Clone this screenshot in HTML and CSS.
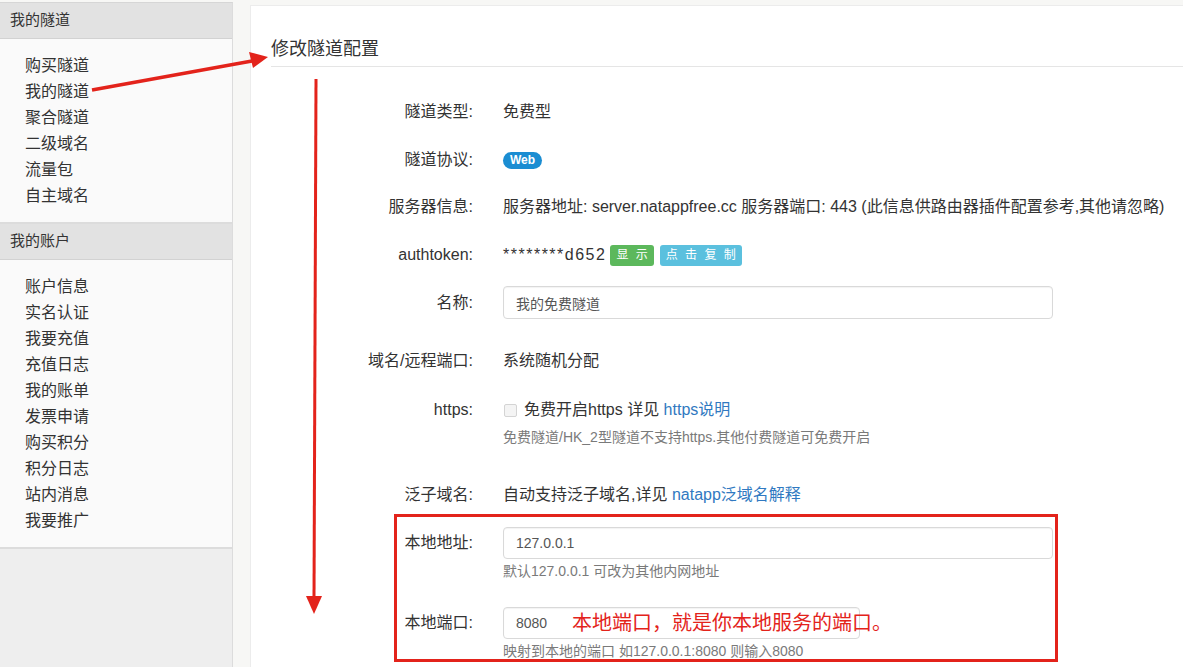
FILE: index.html
```html
<!DOCTYPE html>
<html lang="zh-CN">
<head>
  <meta charset="UTF-8">
  <title>修改隧道配置</title>
  <link rel="stylesheet" href="styles.css">
</head>
<body>
  <div class="layout">
    <aside class="sidebar">
      <div class="side-group">
        <div class="side-head">我的隧道</div>
        <ul class="side-list">
          <li>购买隧道</li>
          <li>我的隧道</li>
          <li>聚合隧道</li>
          <li>二级域名</li>
          <li>流量包</li>
          <li>自主域名</li>
        </ul>
      </div>
      <div class="side-group">
        <div class="side-head">我的账户</div>
        <ul class="side-list">
          <li>账户信息</li>
          <li>实名认证</li>
          <li>我要充值</li>
          <li>充值日志</li>
          <li>我的账单</li>
          <li>发票申请</li>
          <li>购买积分</li>
          <li>积分日志</li>
          <li>站内消息</li>
          <li>我要推广</li>
        </ul>
      </div>
    </aside>

    <main class="panel">
      <h3 class="panel-title">修改隧道配置</h3>
      <form class="form">
        <div class="row">
          <label class="row-label">隧道类型:</label>
          <div class="row-value">免费型</div>
        </div>
        <div class="row tight">
          <label class="row-label">隧道协议:</label>
          <div class="row-value"><span class="badge">Web</span></div>
        </div>
        <div class="row">
          <label class="row-label">服务器信息:</label>
          <div class="row-value">服务器地址: server.natappfree.cc 服务器端口: 443 (此信息供路由器插件配置参考,其他请忽略)</div>
        </div>
        <div class="row">
          <label class="row-label">authtoken:</label>
          <div class="row-value token-line">
            <span class="token">********d652</span>
            <button type="button" class="btn btn-green">显 示</button>
            <button type="button" class="btn btn-cyan">点 击 复 制</button>
          </div>
        </div>
        <div class="row spaced">
          <label class="row-label">名称:</label>
          <div class="row-value"><input class="field" type="text" value="我的免费隧道"></div>
        </div>
        <div class="row loose">
          <label class="row-label">域名/远程端口:</label>
          <div class="row-value">系统随机分配</div>
        </div>
        <div class="row wide">
          <label class="row-label">https:</label>
          <div class="row-value">
            <div class="check-line"><span class="check"></span>免费开启https 详见 <a class="link">https说明</a></div>
            <div class="help">免费隧道/HK_2型隧道不支持https.其他付费隧道可免费开启</div>
          </div>
        </div>
        <div class="row loose">
          <label class="row-label">泛子域名:</label>
          <div class="row-value">自动支持泛子域名,详见 <a class="link">natapp泛域名解释</a></div>
        </div>
        <div class="row input-row mid">
          <label class="row-label">本地地址:</label>
          <div class="row-value">
            <input class="field" type="text" value="127.0.0.1">
            <div class="help">默认127.0.0.1 可改为其他内网地址</div>
          </div>
        </div>
        <div class="row input-row">
          <label class="row-label">本地端口:</label>
          <div class="row-value">
            <input class="field field-port" type="text" value="8080">
            <div class="help">映射到本地的端口 如127.0.0.1:8080 则输入8080</div>
          </div>
        </div>
      </form>
    </main>
  </div>

  <svg class="marks" width="1183" height="667" viewBox="0 0 1183 667">
    <line x1="92" y1="90" x2="252" y2="61" stroke="#e3231b" stroke-width="3.5"/>
    <polygon points="268,57 249,52 253,68" fill="#e3231b"/>
    <line x1="316" y1="79" x2="314" y2="598" stroke="#e3231b" stroke-width="3"/>
    <polygon points="306,596 322,596 314,614" fill="#e3231b"/>
    <rect x="395.5" y="515.5" width="661" height="145" fill="none" stroke="#e3231b" stroke-width="3"/>
  </svg>
  <div class="note">本地端口，就是你本地服务的端口。</div>
</body>
</html>
```

FILE: styles.css
```css
html, body {
  margin: 0;
  padding: 0;
}
body {
  width: 1183px;
  height: 667px;
  overflow: hidden;
  position: relative;
  font: 16px/1.4 "Liberation Sans", "Noto Sans CJK SC", sans-serif;
  color: #333;
  background: #f7f7f5;
}
.layout {
  display: flex;
  align-items: flex-start;
  height: 667px;
}

/* sidebar */
.sidebar {
  width: 232px;
  height: 665px;
  margin-top: 2px;
  border-top: 1px solid #d6d6d6;
  border-right: 1px solid #dcdcdc;
  background: #eeeeee;
  flex-shrink: 0;
}
.side-group {
  background: #fafafa;
  border-bottom: 2px solid #dcdcdc;
}
.side-head {
  height: 35px;
  line-height: 34px;
  padding-left: 10px;
  background: #e2e2e2;
  border-bottom: 1px solid #d2d2d2;
  font-size: 15px;
  color: #333;
}
.side-list {
  list-style: none;
  margin: 0;
  padding: 14px 0 13px 25px;
}
.side-list li {
  height: 26px;
  line-height: 26px;
  font-size: 16px;
  color: #333;
}

/* main panel */
.panel {
  flex: 1;
  height: 662px;
  margin: 5px 0 0 17px;
  padding-left: 20px;
  background: #fff;
  border-left: 1px solid #ececec;
  border-top: 1px solid #ececec;
}
.panel-title {
  margin: 30px 0 0;
  padding-bottom: 4px;
  line-height: 26px;
  font-size: 18px;
  font-weight: normal;
  color: #333;
  border-bottom: 1px solid #e5e5e5;
}
.form {
  margin-top: 28px;
}
.row {
  display: flex;
  min-height: 34px;
  margin-bottom: 14px;
}
.row.tight { margin-bottom: 13px; }
.row.loose { margin-bottom: 15px; }
.row.spaced { margin-bottom: 24px; }
.row.wide { margin-bottom: 31px; }
.row.mid { margin-bottom: 27px; }
.row-label {
  width: 202px;
  flex-shrink: 0;
  text-align: right;
  line-height: 34px;
}
.input-row .row-label {
  line-height: 32px;
}
.row-value {
  margin-left: 30px;
  line-height: 34px;
  white-space: nowrap;
}
.token-line {
  display: flex;
  align-items: center;
}
.token {
  letter-spacing: 1.5px;
}
.badge {
  display: inline-block;
  vertical-align: top;
  margin-top: 9px;
  padding: 0 7px;
  height: 17px;
  line-height: 17px;
  border-radius: 9px;
  background: #1b8dd2;
  color: #fff;
  font-size: 12px;
  font-weight: bold;
}
.btn {
  height: 21px;
  padding: 0 4px 0 6px;
  border: 0;
  border-radius: 3px;
  color: #fff;
  font: 12px/21px "Liberation Sans", "Noto Sans CJK SC", sans-serif;
  letter-spacing: 2px;
}
.btn-green {
  background: #5cb85c;
  margin-left: 4px;
}
.btn-cyan {
  background: #5bc0de;
  margin-left: 6px;
}
.field {
  display: block;
  box-sizing: border-box;
  width: 550px;
  height: 33px;
  padding: 0 12px;
  border: 1px solid #d9d9d9;
  border-radius: 4px;
  font: 14px "Liberation Sans", "Noto Sans CJK SC", sans-serif;
  color: #555;
  box-shadow: inset 0 1px 1px rgba(0, 0, 0, 0.05);
}
.input-row .field {
  height: 32px;
}
.field-port {
  width: 357px;
}
.check-line {
  display: flex;
  align-items: center;
  white-space: pre;
}
.check {
  display: inline-block;
  width: 11px;
  height: 11px;
  margin: 0 7px 0 1px;
  border: 1px solid #d4d4d4;
  border-radius: 2px;
  background: #f4f4f4;
}
.link {
  color: #3079c1;
}
.help {
  line-height: 20px;
  font-size: 14px;
  color: #7a7a7a;
}
.input-row .help {
  margin-top: 3px;
  line-height: 18px;
}

/* annotations drawn over the page */
.marks {
  position: absolute;
  top: 0;
  left: 0;
  pointer-events: none;
}
.note {
  position: absolute;
  left: 572px;
  top: 608px;
  line-height: 30px;
  font-size: 20px;
  color: #e3231b;
  white-space: nowrap;
}
```
